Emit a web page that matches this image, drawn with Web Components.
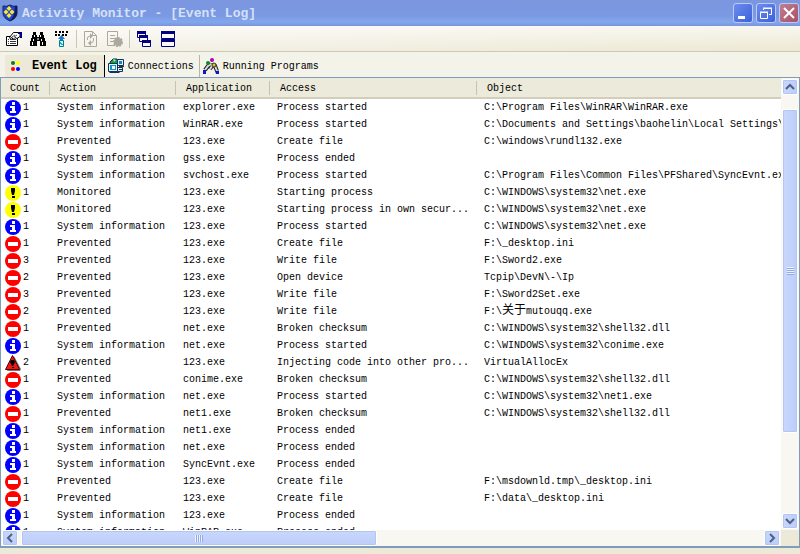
<!DOCTYPE html>
<html lang="en">
<head>
  <meta charset="UTF-8">
  <meta name="viewport" content="width=device-width, initial-scale=1.0">
  <title>Activity Monitor</title>
  <style>
    body {
      margin: 0;
      height: 100vh;
      overflow: hidden;
      font: 10px/17px "Liberation Mono", "Noto Sans CJK SC", monospace;
      color: #000;
    }
  </style>
</head>
<body>
  <monitor-window>
    <title-bar slot="title">Activity Monitor - [Event Log]</title-bar>
    <tool-bar slot="tools"></tool-bar>
    <tab-bar slot="tabs">
      <tab-item active icon="dots">Event Log</tab-item>
      <tab-item icon="network">Connections</tab-item>
      <tab-item icon="programs">Running Programs</tab-item>
    </tab-bar>
    <event-log></event-log>
  </monitor-window>

  <script>
    const icons = {
      shield: `<svg width="16" height="18" viewBox="0 0 16 18"><path d="M1 2q4 1 7-1 3 2 7 1v7q0 5-7 8-7-3-7-8z" fill="#1e44d0" stroke="#15235e"/><path d="M13 2h2v7q0 5-7 8 5-5 5-15" fill="#101c58"/><g fill="#ffe52e"><path d="M7 2l2.500 2.500L7 7 4.500 4.500zM4 5.500L6.500 8 4 10.500 1.500 8zM10 5.500L12.500 8 10 10.500 7.500 8zM7 9l2.500 2.500L7 14l-2.500-2.500z"/></g></svg>`,
      minimize: `<svg width="18" height="18" viewBox="0 0 18 18"><path d="M4 12h7v3H4z" fill="#fff"/></svg>`,
      restore: `<svg width="18" height="18" viewBox="0 0 18 18" fill="none" stroke="#fff"><path d="M6.500 6V4.500h8v6H12M6 4h9"/><path d="M3.500 8.500h7v6h-7zM3 8h8"/></svg>`,
      close: `<svg width="18" height="18" viewBox="0 0 18 18"><path d="M4 4l10 10M14 4L4 14" stroke="#fff" stroke-width="2"/></svg>`,
      properties: `<svg width="18" height="16" viewBox="0 0 18 16" fill="none" stroke="#000"><path d="M1.500 5.500h11v9h-11z" fill="#fff"/><path d="M3 8.500h1M5 8.500h6M3 10.500h1M5 10.500h6M3 12.500h1M5 12.500h6" stroke="#333"/><path d="M4.500 6.500L8.500 1.500h5l1.500 1v3l-3 2-2-1-2 2-1-2-2 1z" fill="#fff"/><path d="M7 6l3-2M9 6l3-2" stroke="#555"/><path d="M13 1h4v6h-2V3h-2z" fill="#000080" stroke="none"/></svg>`,
      find: `<svg width="16" height="16" viewBox="0 0 16 16"><path d="M3 1h3v3h1v2h2V4h1V1h3v3h1v3h1v3h1v5h-6v-5H7v5H0v-5h1V7h1V4h1z"/><path d="M4.500 4v2M3.500 8v2M2.500 11v3M10.500 4v2M11.500 8v2M12.500 11v3M8 7v2" stroke="#fff"/></svg>`,
      rules: `<svg width="16" height="16" viewBox="0 0 16 16"><path d="M2 0h2v2H2zM2 3h2v2H2zM5 3h2v2H5zM6 0h2v2H6zM9 0h2v2H9zM9 3h2v2H9zM12 3h2v2h-2zM13 0h2v2h-2z" transform="translate(-1)"/><path d="M7.500 4L11 8H9v2H6V8H4z" fill="#1878d8"/><path d="M5.500 9.500h4v6h-4z" fill="#c8ffff" stroke="#087888"/><path d="M6 11h1v1h1v1h1v1H7v-1H6z" fill="#12b8cc"/></svg>`,
      refresh: `<svg width="16" height="16" viewBox="0 0 16 16" fill="none" stroke="#aaa99d"><path d="M1.500 .5h8l4 4v11h-12zM9.500 .5v4h4"/><path d="M4.500 9V7q0-2 3-2M10.500 7v2q0 3-3 3"/><path d="M7 2l3 3-3 3zM8 9l-3 3 3 3z" fill="#aaa99d" stroke="none"/></svg>`,
      options: `<svg width="18" height="16" viewBox="0 0 18 16" fill="none" stroke="#aaa99d"><path d="M9 14.500H1.500v-14h10V8M4 4.500h5M4 7.500h5M4 10.500h3"/><circle cx="12" cy="11" r="4" fill="#aaa99d" stroke-width="2" stroke-dasharray="2 1"/></svg>`,
      cascade: `<svg width="16" height="16" viewBox="0 0 16 16" fill="#f8f7f2" stroke="#000080"><path d="M1.500 .5h8v6h-8z"/><path d="M1 1.500h9" stroke-width="3"/><path d="M3.500 4.500h8v6h-8z"/><path d="M3 5.500h9" stroke-width="3"/><path d="M6.500 9.500h8v6h-8z"/><path d="M6 10.500h9" stroke-width="3"/></svg>`,
      tile: `<svg width="16" height="16" viewBox="0 0 16 16" fill="#f8f7f2" stroke="#000080"><path d="M1.500 .5h13v7h-13zM1.500 8.500h13v7h-13z"/><path d="M1 1.500h14M1 9.500h14" stroke-width="3"/></svg>`,
      dots: `<svg width="16" height="16" viewBox="0 0 16 16"><circle cx="5" cy="5" r="2" fill="#078007"/><circle cx="10" cy="5" r="2" fill="#ff0"/><circle cx="5" cy="11" r="2" fill="#f00"/><circle cx="10" cy="11" r="2" fill="#00f"/></svg>`,
      network: `<svg width="16" height="16" viewBox="0 0 16 16"><path d="M2 4l3-3h4l2 3-2 3H3z" fill="#18a028" stroke="#124"/><path d="M5 1l3 1-2 2z" fill="#8ef"/><path d="M9.500 1.500h6v6h-6zM9.500 9.500h5v4h-5z" fill="#e8edf4" stroke="#135"/><path d="M11 3h3v3h-3z" fill="#18c"/><path d="M.5 5.500h9v8h-9z" fill="#eef" stroke="#135"/><path d="M2 7h6v5H2z" fill="#079bd2"/><path d="M4 8h3v3H4z" fill="#fff"/><path d="M1.500 14.500h10M11 8.500h5M11 11.500h3" stroke="#135"/></svg>`,
      programs: `<svg width="16" height="16" viewBox="0 0 16 16"><path d="M2 12l3-4 3-2M8 7l4 1 2 5M7 11l2-3" fill="none" stroke="#222" stroke-width="4"/><path d="M2 12l3-4 3-2M8 7l4 1 2 5M7 11l2-3" fill="none" stroke="#d8d8d8" stroke-width="2"/><path d="M0 12h3v4H0zM12 13h4v3h-3z" fill="#1414c8"/><circle cx="9" cy="2" r="2" fill="#b000b8"/><circle cx="5" cy="5" r="2" fill="#128b20"/><circle cx="11" cy="7" r="2" fill="#d8c82a" stroke="#333"/></svg>`,
      info: `<svg width="16" height="16" viewBox="0 0 16 16"><circle cx="8" cy="8" r="8" fill="#00f"/><path d="M7 2h3v3H7zM5 6h5v5h1v2H5v-2h2V8H5z" fill="#fff"/></svg>`,
      stop: `<svg width="16" height="16" viewBox="0 0 16 16"><circle cx="8" cy="8" r="8" fill="#f00"/><path d="M3 6h10v4H3z" fill="#fff"/></svg>`,
      warn: `<svg width="16" height="16" viewBox="0 0 16 16"><circle cx="8" cy="8" r="8" fill="#ff0"/><path d="M6 3h4v3L9 10H7L6 6zM7 11h3v2H7z"/></svg>`,
      danger: `<svg width="16" height="16" viewBox="0 0 16 16"><path d="M9 1l7 13-1 2H2z" fill="#777"/><path d="M7.500 .5l7 14H.5z" fill="#f01414" stroke="#500"/><path d="M6 5h3l1 2-2 4H7L5 7zM7 12h2v1H7z"/></svg>`,
      up: `<svg width="14" height="14" viewBox="0 0 14 14"><path d="M3 9l4-4 4 4" fill="none" stroke="#4d6185" stroke-width="2"/></svg>`,
      down: `<svg width="14" height="14" viewBox="0 0 14 14"><path d="M3 5l4 4 4-4" fill="none" stroke="#4d6185" stroke-width="2"/></svg>`,
      left: `<svg width="14" height="14" viewBox="0 0 14 14"><path d="M9 3L5 7l4 4" fill="none" stroke="#4d6185" stroke-width="2"/></svg>`,
      right: `<svg width="14" height="14" viewBox="0 0 14 14"><path d="M5 3l4 4-4 4" fill="none" stroke="#4d6185" stroke-width="2"/></svg>`
    };

    const INFO = 'System information';
    const events = [
      ['info', 1, INFO, 'explorer.exe', 'Process started', 'C:\\Program Files\\WinRAR\\WinRAR.exe'],
      ['info', 1, INFO, 'WinRAR.exe', 'Process started', 'C:\\Documents and Settings\\baohelin\\Local Settings\\'],
      ['stop', 1, 'Prevented', '123.exe', 'Create file', 'C:\\windows\\rundl132.exe'],
      ['info', 1, INFO, 'gss.exe', 'Process ended', ''],
      ['info', 1, INFO, 'svchost.exe', 'Process started', 'C:\\Program Files\\Common Files\\PFShared\\SyncEvnt.exe'],
      ['warn', 1, 'Monitored', '123.exe', 'Starting process', 'C:\\WINDOWS\\system32\\net.exe'],
      ['warn', 1, 'Monitored', '123.exe', 'Starting process in own secur...', 'C:\\WINDOWS\\system32\\net.exe'],
      ['info', 1, INFO, '123.exe', 'Process started', 'C:\\WINDOWS\\system32\\net.exe'],
      ['stop', 1, 'Prevented', '123.exe', 'Create file', 'F:\\_desktop.ini'],
      ['stop', 3, 'Prevented', '123.exe', 'Write file', 'F:\\Sword2.exe'],
      ['stop', 2, 'Prevented', '123.exe', 'Open device', 'Tcpip\\DevN\\-\\Ip'],
      ['stop', 3, 'Prevented', '123.exe', 'Write file', 'F:\\Sword2Set.exe'],
      ['stop', 2, 'Prevented', '123.exe', 'Write file', 'F:\\<span lang="zh">关于</span>mutouqq.exe'],
      ['stop', 1, 'Prevented', 'net.exe', 'Broken checksum', 'C:\\WINDOWS\\system32\\shell32.dll'],
      ['info', 1, INFO, 'net.exe', 'Process started', 'C:\\WINDOWS\\system32\\conime.exe'],
      ['danger', 2, 'Prevented', '123.exe', 'Injecting code into other pro...', 'VirtualAllocEx'],
      ['stop', 1, 'Prevented', 'conime.exe', 'Broken checksum', 'C:\\WINDOWS\\system32\\shell32.dll'],
      ['info', 1, INFO, 'net.exe', 'Process started', 'C:\\WINDOWS\\system32\\net1.exe'],
      ['stop', 1, 'Prevented', 'net1.exe', 'Broken checksum', 'C:\\WINDOWS\\system32\\shell32.dll'],
      ['info', 1, INFO, 'net1.exe', 'Process ended', ''],
      ['info', 1, INFO, 'net.exe', 'Process ended', ''],
      ['info', 1, INFO, 'SyncEvnt.exe', 'Process ended', ''],
      ['stop', 1, 'Prevented', '123.exe', 'Create file', 'F:\\msdownld.tmp\\_desktop.ini'],
      ['stop', 1, 'Prevented', '123.exe', 'Create file', 'F:\\data\\_desktop.ini'],
      ['info', 1, INFO, '123.exe', 'Process ended', ''],
      ['info', 1, INFO, 'WinRAR.exe', 'Process ended', '']
    ];

    class MonitorWindow extends HTMLElement {
      constructor() {
        super();
        this.attachShadow({ mode: 'open' }).innerHTML = `
          <style>
            :host {
              display: flex;
              flex-direction: column;
              height: 100%;
              background: #ece9d8;
            }
            main {
              flex: 1;
              min-height: 0;
              display: flex;
              padding-bottom: 6px;
            }
          </style>
          <slot name="title"></slot>
          <slot name="tools"></slot>
          <slot name="tabs"></slot>
          <main><slot></slot></main>
        `;
      }
    }

    class TitleBar extends HTMLElement {
      constructor() {
        super();
        this.attachShadow({ mode: 'open' }).innerHTML = `
          <style>
            :host {
              display: flex;
              align-items: center;
              height: 26px;
              padding: 0 1px 0 2px;
              box-sizing: border-box;
              background: linear-gradient(#7b96df, #7b98e2 60%, #82a8ec 85%, #7a93dc);
            }
            h1 {
              flex: 1;
              margin: 0 0 0 4px;
              font-size: 13px;
              color: #d5e1f8;
            }
            svg {
              display: block;
            }
            button {
              width: 20px;
              height: 20px;
              margin-left: 3px;
              padding: 0;
              box-sizing: border-box;
              border: 1px solid #b9cbf5;
              border-radius: 3px;
              background: linear-gradient(135deg, #6d8df0, #3c60d8);
              display: grid;
              place-content: center;
            }
            .close {
              background: linear-gradient(135deg, #c08092, #a84f62);
            }
          </style>
          ${icons.shield}
          <h1><slot></slot></h1>
          <button type="button" aria-label="Minimize">${icons.minimize}</button>
          <button type="button" aria-label="Restore">${icons.restore}</button>
          <button type="button" class="close" aria-label="Close">${icons.close}</button>
        `;
      }
    }

    class ToolBar extends HTMLElement {
      constructor() {
        super();
        const button = (name, label, state = '') =>
          `<button type="button" aria-label="${label}" ${state}>${icons[name]}</button>`;
        this.attachShadow({ mode: 'open' }).innerHTML = `
          <style>
            :host {
              display: flex;
              align-items: center;
              height: 26px;
              padding-left: 2px;
              box-sizing: border-box;
              border-bottom: 1px solid #cdc9b6;
              background: linear-gradient(#fffa, #fff0), linear-gradient(90deg, #f4f2e9, #ece8d2);
            }
            button {
              width: 24px;
              height: 24px;
              padding: 0;
              border: 0;
              background: none;
              display: grid;
              place-content: center;
            }
            svg {
              display: block;
            }
            i {
              width: 1px;
              height: 18px;
              margin: 0 2px;
              background: #c9c6b4;
            }
          </style>
          ${button('properties', 'Properties')}
          ${button('find', 'Find')}
          ${button('rules', 'Rules')}
          <i></i>
          ${button('refresh', 'Refresh', 'disabled')}
          ${button('options', 'Options', 'disabled')}
          <i></i>
          ${button('cascade', 'Cascade')}
          ${button('tile', 'Tile')}
        `;
      }
    }

    class TabBar extends HTMLElement {
      constructor() {
        super();
        this.attachShadow({ mode: 'open' }).innerHTML = `
          <style>
            :host {
              display: flex;
              height: 25px;
              padding: 3px 0 0 5px;
              box-sizing: border-box;
              background: #f4f3ea;
            }
          </style>
          <slot></slot>
        `;
      }
    }

    class TabItem extends HTMLElement {
      connectedCallback() {
        this.attachShadow({ mode: 'open' }).innerHTML = `
          <style>
            :host {
              display: block;
            }
            button {
              display: flex;
              align-items: center;
              gap: 4px;
              height: 22px;
              padding: 0 5px 0 3px;
              border: 0;
              background: none;
              font: inherit;
              color: inherit;
            }
            svg {
              display: block;
            }
            :host([active]) button {
              gap: 8px;
              padding-right: 7px;
              border-right: 1px solid #000;
              background: #ece9d8;
              font-size: 12px;
              font-weight: bold;
            }
            :host(:not([active]):not(:last-child)) button {
              border-right: 1px solid #b8b5a4;
            }
          </style>
          <button type="button">${icons[this.getAttribute('icon')]}<span><slot></slot></span></button>
        `;
      }
    }

    class ScrollBar extends HTMLElement {
      connectedCallback() {
        const vertical = this.hasAttribute('vertical');
        const [before, size, after] = this.getAttribute('thumb').split(' ');
        this.attachShadow({ mode: 'open' }).innerHTML = `
          <style>
            :host {
              display: flex;
              flex-direction: ${vertical ? 'column' : 'row'};
              gap: 1px;
              padding: ${vertical ? '1px' : '0 1px'};
              background: #f8f7f2;
            }
            button, .thumb {
              box-sizing: border-box;
              border: 1px solid #fff;
              border-radius: 2px;
              background: linear-gradient(${vertical ? '90deg' : '180deg'}, #c9d7fc, #bccdf9);
              box-shadow: inset 0 0 0 1px #b3c6f3;
            }
            button {
              flex: none;
              width: 16px;
              height: 16px;
              padding: 0;
              display: grid;
              place-content: center;
            }
            svg {
              display: block;
            }
            .thumb {
              flex: ${size} 0 0;
              display: grid;
              place-content: center;
            }
            .grip {
              width: ${vertical ? 7 : 8}px;
              height: ${vertical ? 8 : 7}px;
              background: repeating-linear-gradient(${vertical ? '180deg' : '90deg'}, #eef4fe 0 1px, #8fa9e4 1px 2px);
            }
          </style>
          <button type="button" aria-label="Scroll back">${icons[vertical ? 'up' : 'left']}</button>
          <div style="flex: ${before} 0 0"></div>
          <div class="thumb"><div class="grip"></div></div>
          <div style="flex: ${after} 0 0"></div>
          <button type="button" aria-label="Scroll forward">${icons[vertical ? 'down' : 'right']}</button>
        `;
      }
    }

    class EventLog extends HTMLElement {
      constructor() {
        super();
        this.attachShadow({ mode: 'open' });
      }

      connectedCallback() {
        this.render();
      }

      render() {
        const rows = events.map(([icon, count, ...cells]) => `
          <tr>
            <td><div>${icons[icon]}${count}</div></td>
            ${cells.map((cell) => `<td>${cell}</td>`).join('')}
          </tr>`).join('');

        this.shadowRoot.innerHTML = `
          <style>
            :host {
              flex: 1;
              min-width: 0;
              display: grid;
              grid-template: minmax(0, 1fr) 16px / minmax(0, 1fr) 18px;
              box-sizing: border-box;
              border: 1px solid #7f9db9;
              border-bottom-width: 2px;
              background: #ece9d8;
            }
            .view {
              overflow: hidden;
              background: #fff;
            }
            table {
              width: 100%;
              table-layout: fixed;
              border-collapse: separate;
              border-spacing: 0;
            }
            th, td {
              height: 17px;
              padding: 0 0 0 7px;
              text-align: left;
              font-weight: normal;
              white-space: nowrap;
              overflow: hidden;
            }
            th {
              height: 21px;
              padding: 2px 0 0 10px;
              box-sizing: border-box;
              border-bottom: 2px solid #d2cebb;
              background: linear-gradient(#c5c2b0, #c5c2b0) right / 1px 14px no-repeat, #ebeadb;
            }
            th:last-child {
              background: #ebeadb;
            }
            th:first-child {
              padding-left: 9px;
            }
            td:first-child {
              padding-left: 4px;
            }
            td div {
              display: flex;
              align-items: center;
              gap: 2px;
            }
            svg {
              flex: none;
              width: 16px;
              height: 16px;
            }
            [lang] {
              font-size: 12px;
              line-height: 1;
            }
          </style>
          <div class="view">
            <table>
              <colgroup>
                <col style="width: 49px"><col style="width: 126px"><col style="width: 94px"><col style="width: 207px"><col>
              </colgroup>
              <thead>
                <tr><th>Count</th><th>Action</th><th>Application</th><th>Access</th><th>Object</th></tr>
              </thead>
              <tbody>${rows}</tbody>
            </table>
          </div>
          <scroll-bar vertical thumb="12 325 79"></scroll-bar>
          <scroll-bar thumb="1 357 388"></scroll-bar>
        `;
      }
    }

    customElements.define('monitor-window', MonitorWindow);
    customElements.define('title-bar', TitleBar);
    customElements.define('tool-bar', ToolBar);
    customElements.define('tab-bar', TabBar);
    customElements.define('tab-item', TabItem);
    customElements.define('scroll-bar', ScrollBar);
    customElements.define('event-log', EventLog);
  </script>
</body>
</html>
